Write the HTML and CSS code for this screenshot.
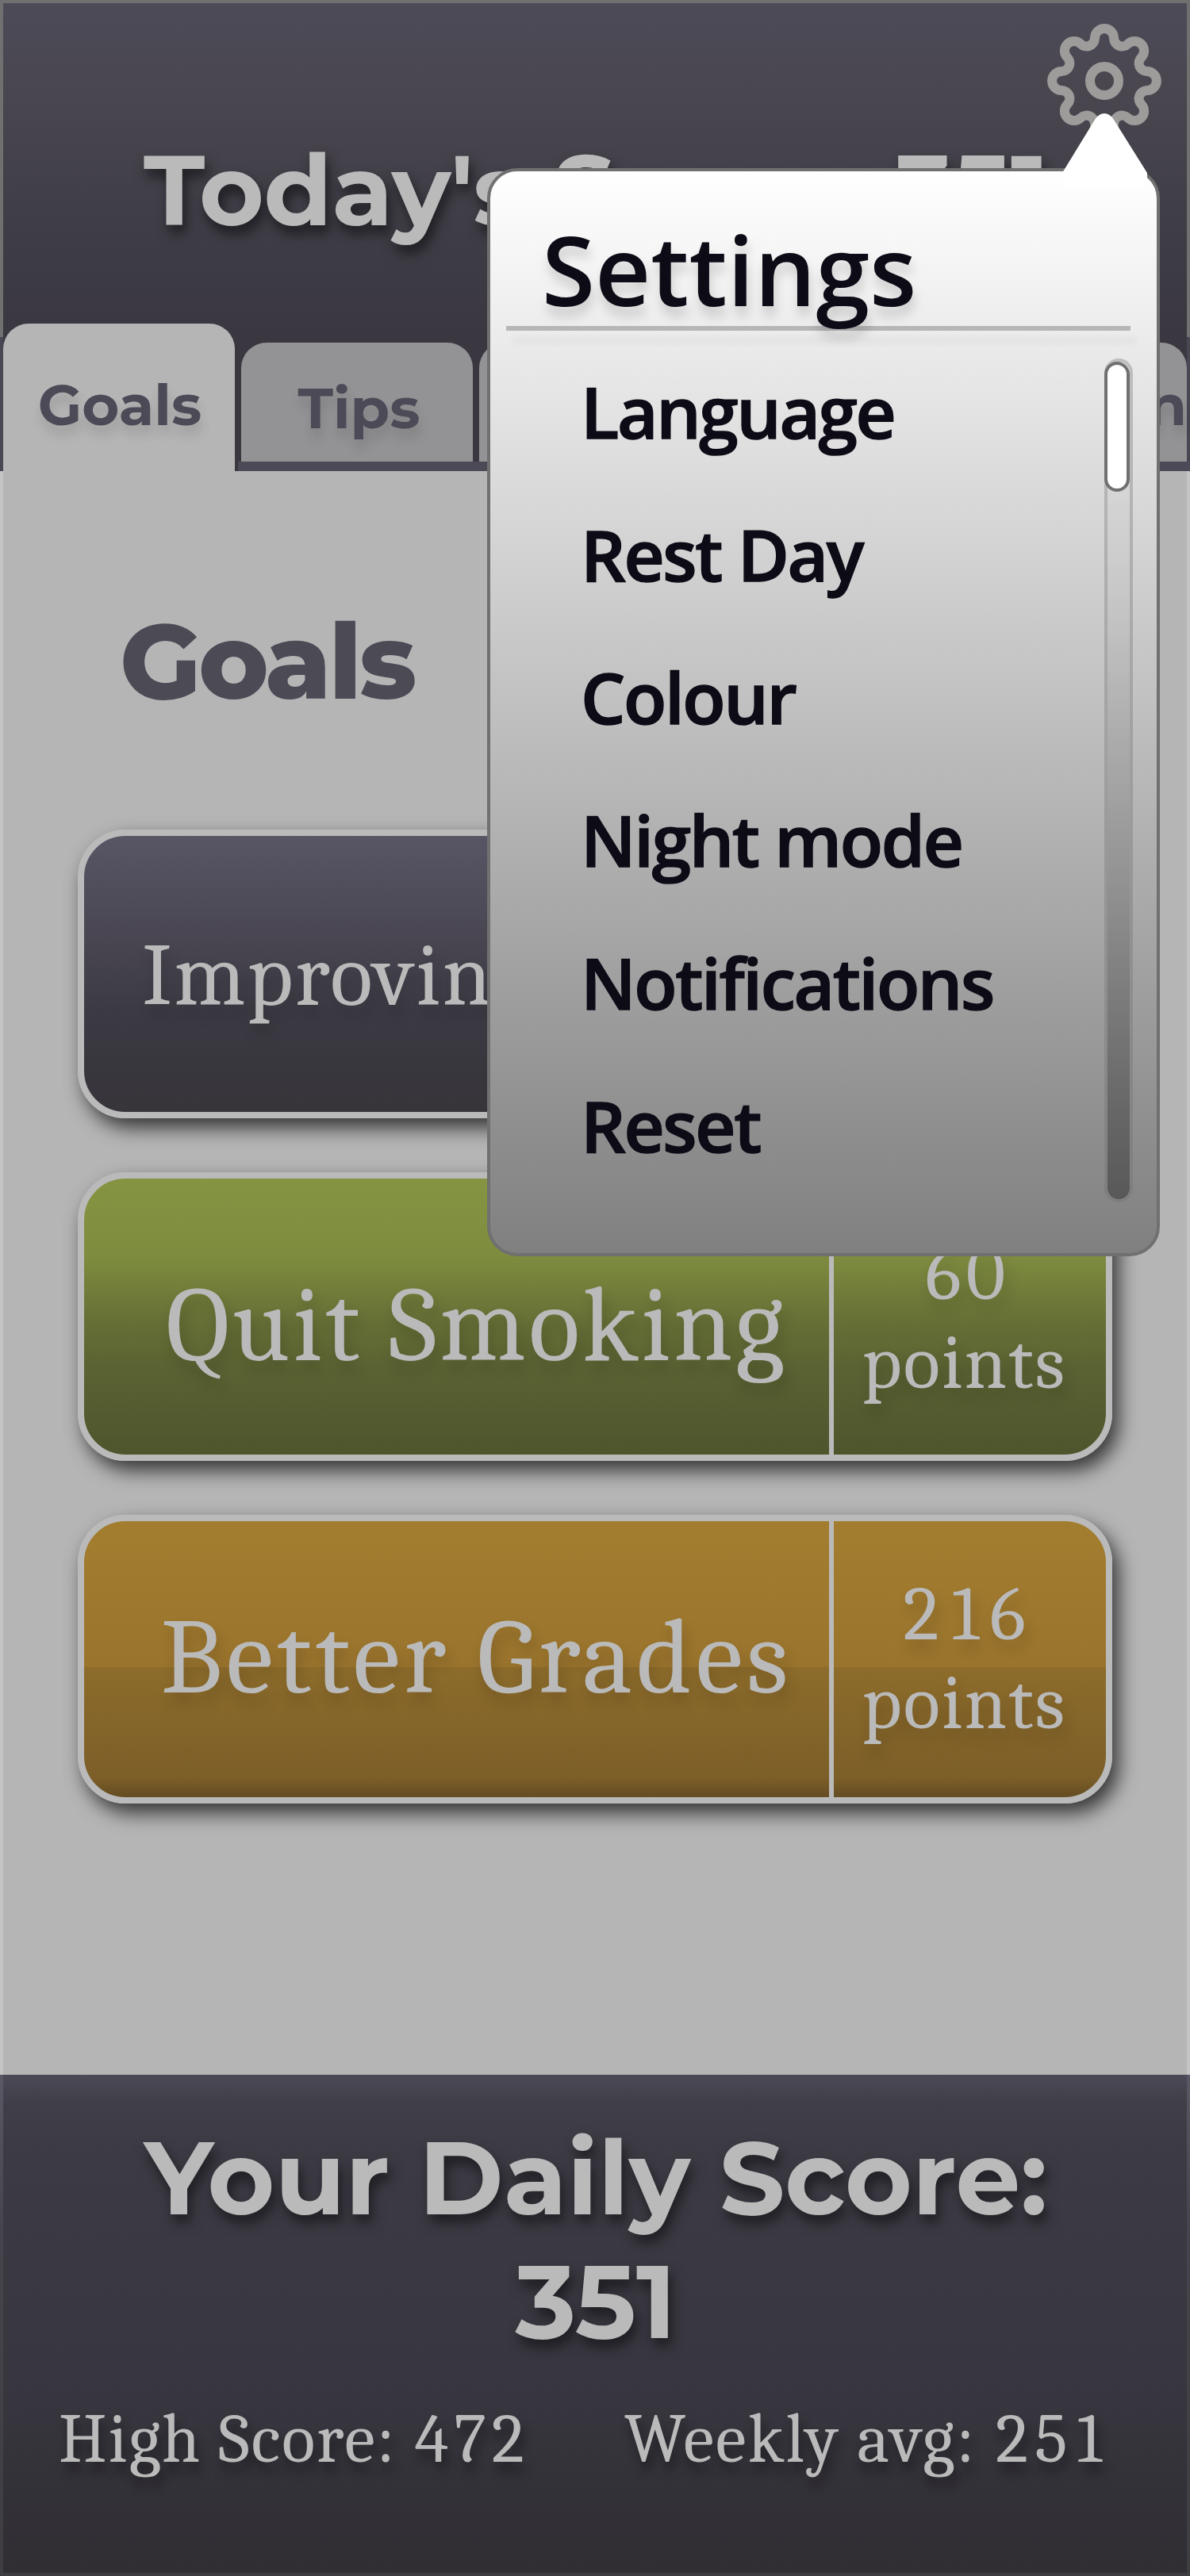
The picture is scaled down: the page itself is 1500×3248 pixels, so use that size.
FILE: index.html
```html
<!DOCTYPE html>
<html lang="en">
<head>
<meta charset="utf-8">
<title>Goals</title>
<link rel="stylesheet" href="styles.css">
</head>
<body>
<main class="screen">
  <header class="header">
    <h1 class="header-title">Today's Score: 351</h1>
    <svg class="gear" viewBox="-72 -72 144 144" aria-label="Settings">
      <path d="M12-53.9A12 12 0 0 0-12-53.9A10.3 10.3 0 0 1-29.6-46.6A12 12 0 0 0-46.6-29.6A10.3 10.3 0 0 1-53.9-12A12 12 0 0 0-53.9 12A10.3 10.3 0 0 1-46.6 29.6A12 12 0 0 0-29.6 46.6A10.3 10.3 0 0 1-12 53.9A12 12 0 0 0 12 53.9A10.3 10.3 0 0 1 29.6 46.6A12 12 0 0 0 46.6 29.6A10.3 10.3 0 0 1 53.9 12A12 12 0 0 0 53.9-12A10.3 10.3 0 0 1 46.6-29.6A12 12 0 0 0 29.6-46.6A10.3 10.3 0 0 1 12-53.9Z"/>
      <circle r="18"/>
    </svg>
    <nav class="tabs">
      <div class="tab tab-active">Goals</div>
      <div class="tab">Tips</div>
      <div class="tab"></div>
      <div class="tab"></div>
      <div class="tab tab-last">n</div>
    </nav>
  </header>

  <section class="content">
    <h2 class="content-title">Goals</h2>
    <div class="goals">
      <article class="goal goal-slate">
        <div class="goal-name">Improving</div>
      </article>
      <article class="goal goal-green">
        <div class="goal-name">Quit Smoking</div>
        <div class="goal-points"><span class="num">60</span><span>points</span></div>
      </article>
      <article class="goal goal-amber">
        <div class="goal-name">Better Grades</div>
        <div class="goal-points"><span class="num">216</span><span>points</span></div>
      </article>
    </div>
  </section>

  <footer class="footer">
    <div class="daily">Your Daily Score:<br>351</div>
    <div class="stats">
      <div class="stat stat-high">High Score: <span class="num">472</span></div>
      <div class="stat">Weekly avg: <span class="num">251</span></div>
    </div>
  </footer>

  <aside class="popup">
    <svg class="popup-arrow" viewBox="0 0 110 94"><path d="M1 75L42 8Q47 0 54 0Q61 0 66 8L108 75Q109 94 96 94H12Q1 94 1 75Z"/></svg>
    <h2 class="popup-title">Settings</h2>
    <div class="popup-body">
      <ul class="menu">
        <li>Language</li>
        <li>Rest Day</li>
        <li>Colour</li>
        <li>Night mode</li>
        <li>Notifications</li>
        <li>Reset</li>
      </ul>
      <div class="track"><div class="thumb"></div></div>
    </div>
  </aside>
</main>
</body>
</html>
```

FILE: styles.css
```css
* { box-sizing: border-box; margin: 0; padding: 0; }

body { width: 1500px; background: #b5b5b5; }

.screen {
  position: relative;
  display: flex;
  flex-direction: column;
  width: 1500px;
  height: 3248px;
  overflow: hidden;
  font-family: Montserrat, Inter, sans-serif;
}

/* Header */
.header {
  position: relative;
  display: flex;
  flex-direction: column;
  justify-content: space-between;
  height: 594px;
  padding-top: 164px;
  background:
    linear-gradient(#707070, #707070) top / 100% 4px no-repeat,
    linear-gradient(#707070 425px, #4a4754 425px) left / 4px 100% no-repeat,
    linear-gradient(#707070 425px, #4a4754 425px) right / 4px 100% no-repeat,
    linear-gradient(#4d4b58 0, #49464f 120px, #3e3c45 300px, #3a3740 430px, #3a3740 100%);
}

.header-title {
  padding-left: 181px;
  font-size: 125px;
  font-weight: 700;
  line-height: 150px;
  letter-spacing: -.5px;
  white-space: nowrap;
  color: #bababa;
  text-shadow: 4px 10px 16px rgba(0, 0, 0, .55);
}

.gear {
  position: absolute;
  left: 1320px;
  top: 30px;
  width: 144px;
  height: 144px;
  fill: none;
  stroke: #9d9c9a;
  stroke-width: 12;
}

.tabs {
  display: flex;
  align-items: flex-end;
  gap: 8px;
  height: 186px;
  padding: 0 4px;
  background: linear-gradient(#4c4a57, #4c4a57) right bottom / 1200px 12px no-repeat;
}

.tab {
  width: 292px;
  height: 150px;
  margin-bottom: 12px;
  padding: 38px 0 0 5px;
  border-radius: 32px 32px 0 0;
  background: #939395;
  color: #4c4a57;
  font-size: 72px;
  font-weight: 700;
  line-height: 88px;
  text-align: center;
  text-shadow: 2px 12px 14px rgba(0, 0, 0, .12);
}

.tab-active {
  height: 186px;
  margin-bottom: 0;
  padding: 58px 0 0 2px;
  background: #b5b5b5;
}

.tab-last { padding-top: 34px; text-align: right; }

/* Content */
.content {
  height: 2022px;
  padding: 159px 94px 0;
  border: solid #c4c4c4;
  border-width: 0 4px;
}

.content-title {
  padding-left: 53px;
  margin-bottom: 133px;
  font-size: 133px;
  font-weight: 800;
  line-height: 160px;
  letter-spacing: -3.200px;
  color: #4c4a55;
}

.goals { display: flex; flex-direction: column; gap: 68px; }

.goal {
  display: flex;
  height: 364px;
  border: 8px solid #bababa;
  border-radius: 60px;
  box-shadow: 8px 12px 24px rgba(0, 0, 0, .7);
  color: #bababa;
  font-family: Cambria, Caladea, "Noto Serif", serif;
  text-shadow: 4px 12px 18px rgba(0, 0, 0, .16);
}

.goal-slate { background: linear-gradient(#585665, #4a4753 35%, #3b3942 65%, #37353a); }
.goal-green { background: linear-gradient(#859442, #7e8c3f 28%, #666f36 52%, #5a6132 70%, #4e552d); }
.goal-amber { background: linear-gradient(#a37d2f, #9a742d 53%, #8d6c2b 53%, #7c5e28 93%, #644c22); }

.goal-name {
  width: 945px;
  padding-left: 50px;
  border-right: 6px solid #bababa;
  font-size: 134px;
  line-height: 346px;
  text-align: center;
  letter-spacing: .037em;
  white-space: nowrap;
}

.goal-green .goal-name { line-height: 372px; letter-spacing: .026em; }

.goal-slate .goal-name {
  padding-left: 73px;
  font-size: 111px;
  line-height: 354px;
  text-align: left;
  letter-spacing: .02em;
}

.goal-points {
  flex: 1;
  display: flex;
  flex-direction: column;
  justify-content: center;
  padding-right: 14px;
  font-size: 96px;
  line-height: 112px;
  letter-spacing: .022em;
  text-align: center;
}

.goal-green .goal-points { padding-top: 6px; }

.num { font-variant-numeric: tabular-nums lining-nums; }
.goal-points .num { letter-spacing: .01em; }

/* Footer */
.footer {
  flex: 1;
  padding-top: 52px;
  background:
    linear-gradient(#3e3d42, #3e3d42) bottom / 100% 4px no-repeat,
    linear-gradient(#5a5864, #46444c 30%, #3e3d42) left / 4px 100% no-repeat,
    linear-gradient(#5a5864, #46444c 30%, #3e3d42) right / 4px 100% no-repeat,
    linear-gradient(#4c4a56 0, #403e48 35px, #3c3a43 100px, #38363f 380px, #302e33 100%);
  color: #bababa;
}

.daily {
  padding-left: 2px;
  font-size: 129.500px;
  font-weight: 700;
  line-height: 156px;
  text-align: center;
  text-shadow: 4px 10px 16px rgba(0, 0, 0, .5);
}

.stats {
  display: flex;
  margin-top: 44px;
  padding-left: 74px;
  font-family: Cambria, Caladea, "Noto Serif", serif;
  font-size: 87px;
  line-height: 104px;
  white-space: nowrap;
  text-shadow: 4px 12px 14px rgba(0, 0, 0, .4);
}

.stat { width: 713px; letter-spacing: .026em; }
.stat-high { letter-spacing: .023em; }
.stat .num { letter-spacing: -.002em; }

/* Settings popup */
.popup {
  position: absolute;
  left: 614px;
  top: 212px;
  width: 848px;
  height: 1372px;
  border: 4px solid #707070;
  border-radius: 38px;
  background: linear-gradient(#fff, #808080);
  color: #0d0b16;
  font-family: "Open Sans", "Noto Sans", sans-serif;
}

.popup-arrow {
  position: absolute;
  left: 720px;
  top: -73px;
  width: 110px;
  height: 94px;
  fill: #fff;
}

.popup-title {
  margin: 46px 33px 0 20px;
  font-size: 122px;
  font-weight: 600;
  line-height: 155px;
  text-indent: 45px;
  text-shadow: 2px 12px 14px rgba(0, 0, 0, .15);
}

/* Rule under the title; the descender of the "g" is drawn over it */
.popup-title::after {
  content: "";
  display: block;
  height: 6px;
  margin-top: -6px;
  background: #b6b6b6;
  box-shadow: 8px 15px 10px rgba(0, 0, 0, .06);
}

.popup-body {
  display: flex;
  align-items: flex-start;
  justify-content: space-between;
  padding: 35px 30px 0 114px;
}

.menu {
  margin-top: -23px;
  list-style: none;
  font-size: 89px;
  font-weight: 600;
  line-height: 180px;
  letter-spacing: -2.400px;
  -webkit-text-stroke: 1.500px #0d0b16;
}

.track {
  width: 36px;
  height: 1064px;
  border: 4px solid rgba(112, 112, 112, .35);
  border-radius: 18px;
  background: linear-gradient(rgba(0, 0, 0, 0), rgba(0, 0, 0, .03) 30%, rgba(0, 0, 0, .15) 63%, rgba(0, 0, 0, .34)) padding-box;
}

.thumb {
  width: 32px;
  height: 164px;
  margin-left: -4px;
  border: 4px solid #707070;
  border-radius: 16px;
  background: #fff;
}
```
